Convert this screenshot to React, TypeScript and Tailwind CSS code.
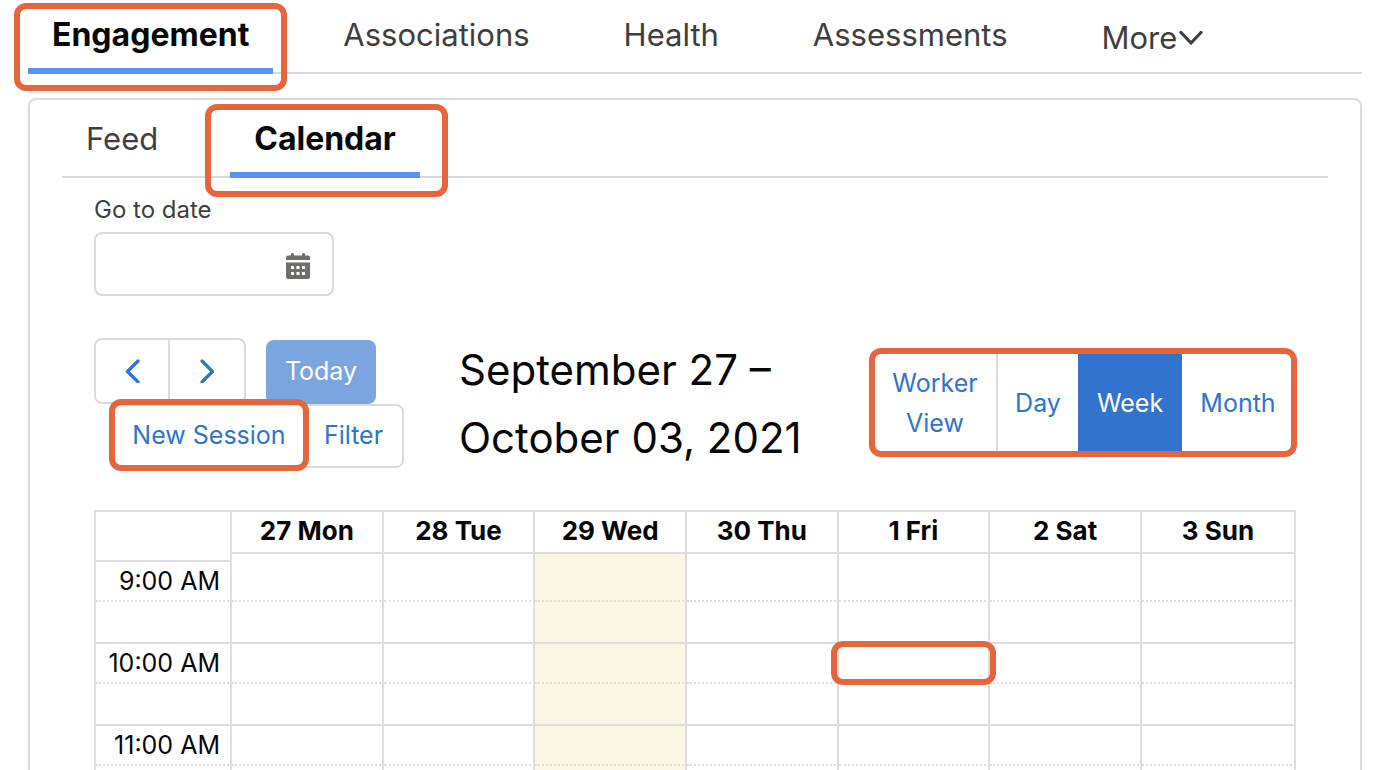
import clsx from "clsx";

const mainTabs = ["Engagement", "Associations", "Health", "Assessments"];

const days = [
  "27 Mon",
  "28 Tue",
  "29 Wed",
  "30 Thu",
  "1 Fri",
  "2 Sat",
  "3 Sun",
];
const today = "29 Wed";

const hours = ["9:00 AM", "10:00 AM", "11:00 AM"];

const views = ["Worker View", "Day", "Week", "Month"];

function Highlight({ className }: { className: string }) {
  return (
    <span
      aria-hidden="true"
      className={clsx(
        "pointer-events-none absolute z-10 rounded-xl border-6 border-[#e5653e]",
        className,
      )}
    />
  );
}

function Chevron({ d, className }: { d: string; className?: string }) {
  return (
    <svg
      viewBox="0 0 24 24"
      fill="none"
      stroke="currentColor"
      strokeLinecap="round"
      strokeLinejoin="round"
      strokeWidth="3.2"
      className={clsx("size-6", className)}
      aria-hidden="true"
    >
      <path d={d} />
    </svg>
  );
}

function CalendarIcon() {
  return (
    <svg viewBox="0 0 24 26" className="h-[26px] w-6" aria-hidden="true">
      <path
        fill="#706e6b"
        fillRule="evenodd"
        d="M22 2.500h-2.800V1.600a1.600 1.600 0 0 0-3.200 0v.9H8v-.9a1.600 1.600 0 0 0-3.200 0v.9H2a2 2 0 0 0-2 2V7h24V4.500a2 2 0 0 0-2-2zM0 9.500V24a2 2 0 0 0 2 2h20a2 2 0 0 0 2-2V9.500zM5 13h3v3H5zm5.500 0h3v3h-3zm5.500 0h3v3h-3zM5 19h3v3H5zm5.500 0h3v3h-3zm5.500 0h3v3h-3z"
      />
    </svg>
  );
}

function Tab({
  label,
  active,
  highlight,
}: {
  label: string;
  active?: boolean;
  highlight?: string;
}) {
  return (
    <a
      href="#"
      aria-current={active ? "page" : undefined}
      className={clsx(
        "relative -mb-0.5 border-b-6 px-6 pb-[13px] leading-10",
        active
          ? "border-[#5693f5] text-[32px] font-bold text-[#080707]"
          : "border-transparent text-[31px] text-[#3e3e3c]",
      )}
    >
      {label}
      {highlight && <Highlight className={highlight} />}
    </a>
  );
}

function MainTabs() {
  return (
    <nav className="flex gap-[46px] border-b-2 border-[#dadada] pt-[15px]">
      {mainTabs.map((label, i) => (
        <Tab
          key={label}
          label={label}
          active={i === 0}
          highlight={
            i === 0 ? "-top-3 -right-3.5 -bottom-[23px] -left-3.5" : undefined
          }
        />
      ))}
      <button
        type="button"
        className="flex items-center px-6 pb-3 text-[31px] leading-10 text-[#3e3e3c]"
      >
        More
        <Chevron d="M2 6.500 12 17 22 6.500" className="ml-0.5" />
      </button>
    </nav>
  );
}

function DateField() {
  return (
    <div className="flex flex-col gap-1.5">
      <label htmlFor="go-to-date" className="text-2xl text-[#3e3e3c]">
        Go to date
      </label>
      <div className="flex h-16 w-60 items-center rounded-lg border-2 border-[#dadada] pr-[22px]">
        <input
          id="go-to-date"
          type="text"
          className="h-full min-w-0 flex-1 px-4 text-2xl outline-none"
        />
        <button type="button" aria-label="Select a date" className="pt-1">
          <CalendarIcon />
        </button>
      </div>
    </div>
  );
}

function Toolbar() {
  return (
    <div className="mt-10 flex items-start text-[25px] text-[#2f74cd]">
      <div className="w-[310px] shrink-0">
        <div className="mt-0.5 flex items-end gap-5">
          <div className="flex h-[66px] divide-x-2 divide-[#dadada] rounded-lg border-2 border-[#dadada]">
            <button
              type="button"
              aria-label="Previous week"
              className="flex w-[74px] items-center justify-center"
            >
              <Chevron d="M18 2 7.500 12.500 18 23" />
            </button>
            <button
              type="button"
              aria-label="Next week"
              className="flex w-[74px] items-center justify-center"
            >
              <Chevron d="M7 2 17.500 12.500 7 23" />
            </button>
          </div>
          <button
            type="button"
            disabled
            className="h-16 w-[110px] rounded-lg bg-[#7aa5df] text-white"
          >
            Today
          </button>
        </div>
        <div className="ml-[19px] flex h-16">
          <button
            type="button"
            className="relative w-48 rounded-l-lg border-2 border-[#dadada]"
          >
            New Session
            <Highlight className="-inset-x-1.5 -top-[7px] -bottom-[5px]" />
          </button>
          <button
            type="button"
            className="flex-1 rounded-r-lg border-2 border-l-0 border-[#dadada]"
          >
            Filter
          </button>
        </div>
      </div>
      <h2 className="ml-[55px] w-[360px] text-[42px] leading-[68px] text-[#080707]">
        September 27 – October 03, 2021
      </h2>
      <div className="relative mt-4 ml-auto flex h-[101px] rounded-lg border-2 border-[#dadada] leading-10">
        {views.map((view) => (
          <button
            key={view}
            type="button"
            aria-pressed={view === "Week"}
            className={clsx(
              view === "Week"
                ? "w-26 bg-[#3274cd] text-white"
                : view === "Worker View"
                  ? "w-31 border-r-2 border-[#dadada] px-4"
                  : view === "Day"
                    ? "w-20"
                    : "w-28",
            )}
          >
            {view}
          </button>
        ))}
        <Highlight className="-inset-y-1.5 -right-[3px] -left-[5px]" />
      </div>
    </div>
  );
}

function WeekGrid() {
  return (
    <table className="mt-[38px] w-full table-fixed border-separate border-spacing-0 border-t-2 border-l-2 border-[#dddddd] text-[25px] leading-9 text-[#080707]">
      <colgroup>
        <col className="w-[136px]" />
        {days.map((day) => (
          <col
            key={day}
            className={day === "3 Sun" ? "w-[154px]" : undefined}
          />
        ))}
      </colgroup>
      <thead>
        <tr>
          <th rowSpan={2} className="border-r-2 border-b-2 border-[#dddddd]" />
          {days.map((day) => (
            <th
              key={day}
              scope="col"
              className="h-[42px] border-r-2 border-b-2 border-[#dddddd] p-0 pb-0.5 text-[26px] font-bold"
            >
              {day}
            </th>
          ))}
        </tr>
        <tr>
          {days.map((day) => (
            <td
              key={day}
              className={clsx(
                "h-2 border-r-2 border-[#dddddd] p-0",
                day === today && "bg-[#faf7e4]",
              )}
            />
          ))}
        </tr>
      </thead>
      {hours.map((hour) => (
        <tbody key={hour}>
          <tr>
            <th
              scope="row"
              className="h-10 border-r-2 border-b-2 border-[#dddddd] p-0 pr-2.5 text-right font-normal [border-bottom-style:dotted]"
            >
              {hour}
            </th>
            {days.map((day) => (
              <td
                key={day}
                className={clsx(
                  "relative border-r-2 border-b-2 border-[#dddddd] p-0 [border-bottom-style:dotted]",
                  day === today && "bg-[#faf7e4]",
                )}
              >
                {hour === "10:00 AM" && day === "1 Fri" && (
                  <Highlight className="-top-[3px] -right-2 -bottom-[3px] -left-2" />
                )}
              </td>
            ))}
          </tr>
          <tr>
            <td className="h-[42px] border-r-2 border-b-2 border-[#dddddd] p-0" />
            {days.map((day) => (
              <td
                key={day}
                className={clsx(
                  "border-r-2 border-b-2 border-[#dddddd] p-0",
                  day === today && "bg-[#faf7e4]",
                )}
              />
            ))}
          </tr>
        </tbody>
      ))}
    </table>
  );
}

export default function App() {
  return (
    <div className="h-screen overflow-hidden bg-white px-7 font-['Inter','Liberation_Sans',sans-serif]">
      <MainTabs />
      <main className="mt-6 rounded-lg border-2 border-[#dadada] px-8 pb-8 shadow-sm">
        <nav className="flex gap-12 border-b-2 border-[#dadada] pt-[19px]">
          <Tab label="Feed" />
          <Tab
            label="Calendar"
            active
            highlight="-top-[15px] -right-7 -bottom-[25px] -left-[25px]"
          />
        </nav>
        <section className="px-8 pt-4">
          <DateField />
          <Toolbar />
          <WeekGrid />
        </section>
      </main>
    </div>
  );
}
